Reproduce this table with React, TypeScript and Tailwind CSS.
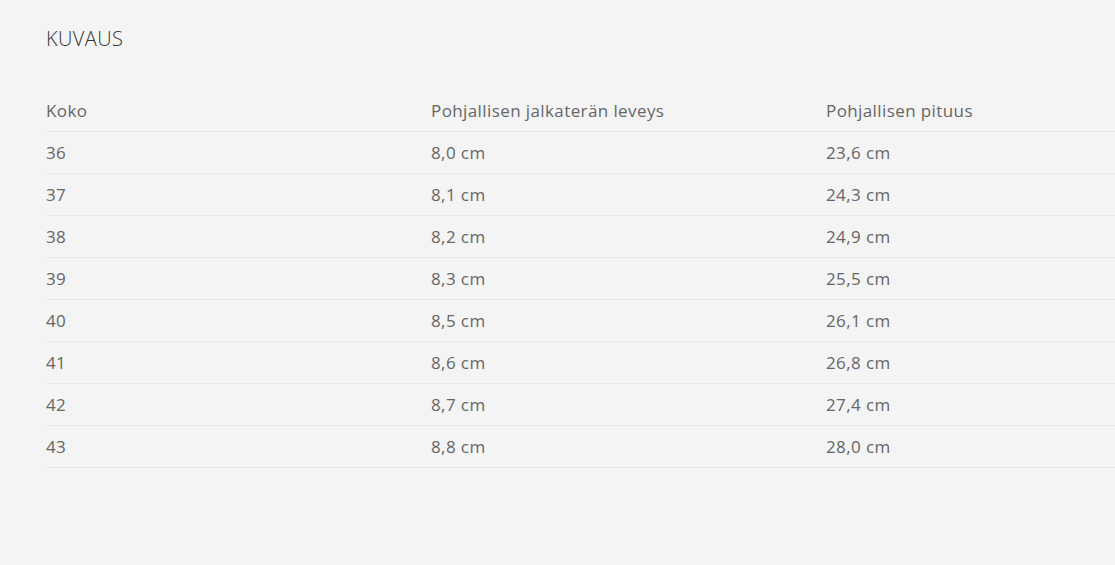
import React from "react";

const rows = [
  ["36", "8,0 cm", "23,6 cm"],
  ["37", "8,1 cm", "24,3 cm"],
  ["38", "8,2 cm", "24,9 cm"],
  ["39", "8,3 cm", "25,5 cm"],
  ["40", "8,5 cm", "26,1 cm"],
  ["41", "8,6 cm", "26,8 cm"],
  ["42", "8,7 cm", "27,4 cm"],
  ["43", "8,8 cm", "28,0 cm"],
];

export default function App() {
  return (
    <div
      className="w-[1115px] h-[565px] bg-[#f4f4f4] overflow-hidden pl-[46px]"
      style={{ fontFamily: '"Open Sans", sans-serif' }}
    >
      <h2 className="pt-[25px] text-[20px] leading-[28px] font-light text-[#333] tracking-[0.4px]">
        KUVAUS
      </h2>
      <div className="mt-[37px] w-[1200px] text-[17px] text-[#666] tracking-[0.4px]">
        {[["Koko", "Pohjallisen jalkaterän leveys", "Pohjallisen pituus"], ...rows].map((r, i) => (
          <div
            key={i}
            className="grid grid-cols-[385px_395px_1fr] h-[42px] items-center border-b border-[#e8e8e8]"
          >
            <div>{r[0]}</div>
            <div>{r[1]}</div>
            <div>{r[2]}</div>
          </div>
        ))}
      </div>
    </div>
  );
}
